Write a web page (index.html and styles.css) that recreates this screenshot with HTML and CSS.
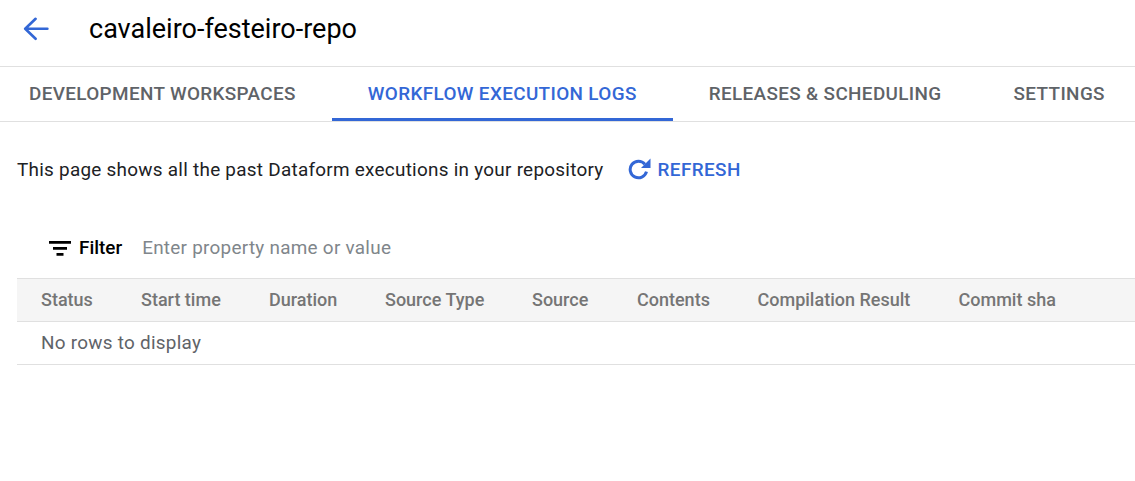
FILE: index.html
```html
<!DOCTYPE html>
<html lang="en">
<head>
<meta charset="utf-8">
<title>cavaleiro-festeiro-repo</title>
<link rel="stylesheet" href="styles.css">
</head>
<body>
<header class="topbar">
  <svg class="back" viewBox="0 0 26 24" width="26" height="24" aria-hidden="true"><path d="M24.4 11.8H2.5M12.6 1.8 2.2 11.8l10.4 10" fill="none" stroke="#3367d6" stroke-width="2.6" stroke-linecap="round" stroke-linejoin="round"/></svg>
  <h1 class="title">cavaleiro-festeiro-repo</h1>
</header>
<nav class="tabs">
  <a class="tab first">DEVELOPMENT WORKSPACES</a>
  <a class="tab active">WORKFLOW EXECUTION LOGS</a>
  <a class="tab">RELEASES &amp; SCHEDULING</a>
  <a class="tab">SETTINGS</a>
</nav>
<main class="content">
  <div class="intro">
    <span class="intro-text">This page shows all the past Dataform executions in your repository</span>
    <button class="refresh">
      <svg viewBox="0 0 24 24" width="24" height="24" aria-hidden="true"><path fill="none" stroke="#3367d6" stroke-width="3" d="M16.9 6.2A8.3 8.3 0 1 0 18.5 13.65"/><path fill="#3367d6" d="M22.5 .5V10H13z"/></svg>
      REFRESH
    </button>
  </div>
  <div class="filter">
    <svg viewBox="0 0 22 16" width="22" height="16" aria-hidden="true"><path fill="#000" d="M0 1h22v2.7H0zM4 7h14v2.7H4zM7.5 13h7v2.7h-7z"/></svg>
    <span class="filter-label">Filter</span>
    <span class="filter-hint">Enter property name or value</span>
  </div>
  <div class="table">
    <div class="head">
      <span class="col c1">Status</span>
      <span class="col c2">Start time</span>
      <span class="col c3">Duration</span>
      <span class="col c4">Source Type</span>
      <span class="col c5">Source</span>
      <span class="col c6">Contents</span>
      <span class="col c7">Compilation Result</span>
      <span class="col c8">Commit sha</span>
    </div>
    <div class="empty">No rows to display</div>
  </div>
</main>
</body>
</html>
```
FILE: styles.css
```css
* { box-sizing: border-box; }
html, body { margin: 0; padding: 0; }
body {
  width: 1135px;
  height: 481px;
  overflow: hidden;
  background: #fff;
  font-family: Roboto, "Liberation Sans", sans-serif;
}
.topbar {
  display: flex;
  align-items: center;
  height: 67px;
  padding: 0 0 8px 23px;
  border-bottom: 1px solid #e0e0e0;
}
.back { flex: none; }
.title {
  margin: 0 0 0 40px;
  font-size: 27px;
  font-weight: 400;
  color: #000;
  line-height: 32px;
}
.tabs {
  display: flex;
  height: 55px;
  border-bottom: 1px solid #e0e0e0;
  white-space: nowrap;
  overflow: hidden;
}
.tab {
  display: flex;
  align-items: center;
  height: 54px;
  padding: 0 36px 1px;
  font-size: 18.9px;
  font-weight: 500;
  letter-spacing: 0.355px;
  color: #5f6368;
}
.tab.first { padding-left: 29px; }
.tab.active {
  color: #3367d6;
  border-bottom: 3px solid #3367d6;
  padding-bottom: 0;
  padding-top: 2px;
}
.content { padding: 0 0 0 17px; }
.intro {
  display: flex;
  align-items: center;
  height: 95px;
}
.intro-text {
  font-size: 18.9px;
  letter-spacing: 0.27px;
  color: #202124;
}
.refresh {
  display: flex;
  align-items: center;
  gap: 6px;
  margin-left: 24px;
  padding: 0;
  border: 0;
  background: none;
  font: 500 18.9px Roboto, sans-serif;
  letter-spacing: 0.4px;
  color: #3367d6;
}
.filter {
  display: flex;
  align-items: center;
  height: 61px;
  padding-left: 32px;
  font-size: 18.9px;
}
.filter-label {
  margin-left: 8px;
  font-weight: 500;
  color: #000;
}
.filter-hint {
  margin-left: 20px;
  letter-spacing: 0.27px;
  color: #80868b;
}
.head {
  display: flex;
  align-items: center;
  height: 44px;
  padding-bottom: 2px;
  background: #f5f5f5;
  border-top: 1px solid #e0e0e0;
  border-bottom: 1px solid #e0e0e0;
  font-size: 18px;
  font-weight: 500;
  color: #757575;
  white-space: nowrap;
}
.col { flex: none; padding-left: 24px; }
.c1 { width: 100px; }
.c2 { width: 128px; }
.c3 { width: 116px; }
.c4 { width: 147px; }
.c5 { width: 105px; }
.c6 { width: 120.5px; }
.c7 { width: 201px; }
.empty {
  display: flex;
  align-items: center;
  height: 43px;
  padding: 0 0 2px 24px;
  border-bottom: 1px solid #e0e0e0;
  font-size: 18.9px;
  letter-spacing: 0.27px;
  color: #5f6368;
}
```
